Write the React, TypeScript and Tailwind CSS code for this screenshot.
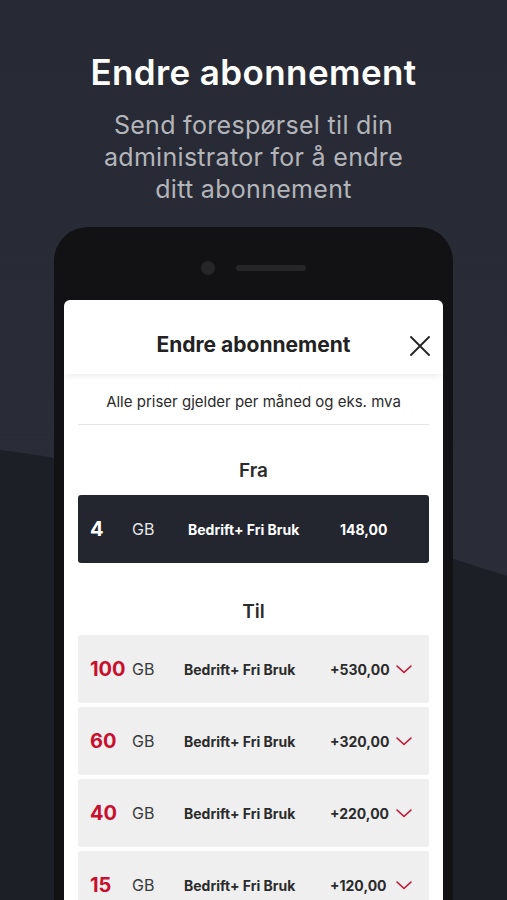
import React from 'react'

const rows = [
  { gb: '100', price: '+530,00' },
  { gb: '60', price: '+320,00' },
  { gb: '40', price: '+220,00' },
  { gb: '15', price: '+120,00' },
]

function Chevron() {
  return (
    <svg width="16" height="9" viewBox="0 0 16 9" fill="none" className="text-[#c8102e]">
      <path d="M1 1l7 6.5L15 1" stroke="currentColor" strokeWidth="1.6" strokeLinecap="round" strokeLinejoin="round" />
    </svg>
  )
}

function CloseIcon() {
  return (
    <svg width="20" height="20" viewBox="0 0 20 20" fill="none">
      <path d="M1 1l18 18M19 1L1 19" stroke="#222" strokeWidth="1.8" strokeLinecap="round" />
    </svg>
  )
}

export default function App() {
  return (
    <div
      className="relative w-[507px] h-[900px] overflow-hidden bg-gradient-to-b from-[#272a34] to-[#2c2f3a]"
      style={{ fontFamily: 'Inter, "Noto Sans", sans-serif' }}
    >
      {/* darker lower background shape */}
      <svg className="absolute inset-0" width="507" height="900" viewBox="0 0 507 900">
        <path d="M0 450 C150 468 350 525 507 576 L507 900 L0 900 Z" fill="#1d1f26" />
      </svg>

      <div className="relative flex flex-col items-center pt-[51px]">
        <h1 className="text-[35px] leading-[42px] font-semibold text-white tracking-[0.4px]">Endre abonnement</h1>
        <p className="mt-[16px] text-[25px] leading-[32px] text-[#b4b5ba] text-center tracking-[0.3px]">
          Send forespørsel til din
          <br />
          administrator for å endre
          <br />
          ditt abonnement
        </p>

        <div className="mt-[22px] w-[399px] h-[700px] rounded-t-[34px] bg-[#121214] px-[10px] pt-[34px]">
          <div className="flex items-center justify-center gap-[21px]">
            <div className="w-[14px] h-[14px] rounded-full bg-[#262629]" />
            <div className="w-[70px] h-[6px] rounded-full bg-[#262629]" />
          </div>

          <div className="mt-[25px] bg-white rounded-t-[6px] h-[640px]">
            <div className="relative flex items-center justify-center pt-[31px] pb-[15px] shadow-[0_4px_6px_-2px_rgba(0,0,0,0.08)]">
              <span className="text-[21px] leading-[28px] font-bold text-[#222]">Endre abonnement</span>
              <div className="absolute right-[13px] top-[36px]">
                <CloseIcon />
              </div>
            </div>

            <div className="px-[14px]">
              <p className="pt-[18px] text-[15px] leading-[20px] text-[#2b2b2b] text-center">
                Alle priser gjelder per måned og eks. mva
              </p>
              <div className="mt-[12px] h-px bg-[#e6e6e6]" />

              <h2 className="mt-[34px] text-[19px] leading-[24px] font-semibold text-[#2b2b2b] text-center">Fra</h2>
              <div className="mt-[12px] h-[68px] rounded-[3px] bg-[#23252f] flex items-center pl-[12px] text-white">
                <span className="w-[42px] text-[20px] font-bold">4</span>
                <span className="w-[56px] text-[16px] text-[#e6e6e8]">GB</span>
                <span className="w-[152px] text-[14px] font-bold">Bedrift+ Fri Bruk</span>
                <span className="text-[14px] font-bold">148,00</span>
              </div>

              <h2 className="mt-[37px] text-[19px] leading-[24px] font-semibold text-[#2b2b2b] text-center">Til</h2>
              <div className="mt-[11px] flex flex-col gap-[4px]">
                {rows.map((r) => (
                  <div key={r.gb} className="h-[68px] rounded-[3px] bg-[#efeff0] flex items-center pl-[12px] text-[#2b2b2b]">
                    <span className="w-[42px] text-[20px] font-bold text-[#c8102e]">{r.gb}</span>
                    <span className="w-[52px] text-[16px] text-[#3a3a3a]">GB</span>
                    <span className="w-[146px] text-[14px] font-bold">Bedrift+ Fri Bruk</span>
                    <span className="w-[66px] text-[14px] font-bold">{r.price}</span>
                    <Chevron />
                  </div>
                ))}
              </div>
            </div>
          </div>
        </div>
      </div>
    </div>
  )
}
